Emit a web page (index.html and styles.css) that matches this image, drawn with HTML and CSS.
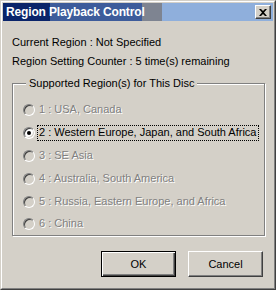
FILE: index.html
```html
<!DOCTYPE html>
<html lang="en">
<head>
    <meta charset="UTF-8">
    <title>Region Playback Control</title>
    <link rel="stylesheet" href="styles.css">
</head>
<body>
    <div class="window">
        <div class="window-inner">
            <div class="title-bar">
                <span class="title">Region Playback Control</span>
                <button class="close-btn" type="button">
                    <svg width="8" height="7" viewBox="0 0 8 7">
                        <path d="M0 0h2l2 2 2-2h2L5 3.5 8 7H6L4 5 2 7H0l3-3.5z" fill="#000"/>
                    </svg>
                </button>
            </div>

            <div class="content">
                <p class="info">Current Region : Not Specified</p>
                <p class="info">Region Setting Counter : 5 time(s) remaining</p>

                <div class="group">
                    <span class="group-label">Supported Region(s) for This Disc</span>
                    <ul class="regions">
                        <li class="region disabled"><span class="radio"></span><span class="region-text">1 : USA, Canada</span></li>
                        <li class="region"><span class="radio checked"></span><span class="region-text focused">2 : Western Europe, Japan, and South Africa</span></li>
                        <li class="region disabled"><span class="radio"></span><span class="region-text">3 : SE Asia</span></li>
                        <li class="region disabled"><span class="radio"></span><span class="region-text">4 : Australia, South America</span></li>
                        <li class="region disabled"><span class="radio"></span><span class="region-text">5 : Russia, Eastern Europe, and Africa</span></li>
                        <li class="region disabled"><span class="radio"></span><span class="region-text">6 : China</span></li>
                    </ul>
                </div>

                <div class="buttons">
                    <button class="btn default" type="button"><span>OK</span></button>
                    <button class="btn" type="button"><span>Cancel</span></button>
                </div>
            </div>
        </div>
    </div>
</body>
</html>
```

FILE: styles.css
```css
/* Hộp thoại kiểu Windows cổ điển */
* {
   box-sizing: border-box;
   font-family: 'Liberation Sans', Arial, sans-serif;
}

body {
   margin: 0;
   background: #d4d0c8;
}

.window {
   width: 276px;
   height: 290px;
   border: 1px solid;
   border-color: #d4d0c8 #404040 #404040 #d4d0c8;
   background: #d4d0c8;
}

.window-inner {
   height: 100%;
   border: 1px solid;
   border-color: #fff #808080 #808080 #fff;
   padding: 1px;
   display: flex;
   flex-direction: column;
}

.title-bar {
   height: 18px;
   display: flex;
   align-items: center;
   justify-content: space-between;
   padding: 0 2px 0 3px;
   background: linear-gradient(to right,
      #0a246a 0, #0a246a 47px,
      #3d5c9b 47px, #3d5c9b 139px,
      #7e8491 139px, #7e8491 159px,
      #8fafdc 159px);
}

.title {
   color: #fff;
   font-weight: bold;
   font-size: 12px;
   letter-spacing: -0.15px;
}

.close-btn {
   width: 16px;
   height: 14px;
   padding: 0;
   display: flex;
   align-items: center;
   justify-content: center;
   background: #d4d0c8;
   border: 1px solid;
   border-color: #fff #404040 #404040 #fff;
   box-shadow: inset -1px -1px #808080;
}

.content {
   padding: 0 9px;
   font-size: 11px;
   color: #000;
}

.info {
   margin: 0;
   line-height: 13px;
}

.info:first-child {
   margin-top: 15px;
}

.info + .info {
   margin-top: 6px;
}

.group {
   position: relative;
   margin-top: 15px;
   width: 253px;
   height: 153px;
   border: 1px solid #808080;
   box-shadow: inset 1px 1px #fff, 1px 1px #fff;
}

.group-label {
   position: absolute;
   left: 13px;
   top: -7px;
   padding: 0 3px;
   line-height: 13px;
   background: #d4d0c8;
}

.regions {
   list-style: none;
   margin: 0;
   padding: 15px 0 0 10px;
}

.region {
   height: 22.8px;
   display: flex;
   align-items: center;
}

.radio {
   width: 12px;
   height: 12px;
   flex: none;
   border-radius: 50%;
   border: 1px solid;
   border-color: #808080 #fff #fff #808080;
   box-shadow: inset 1px 1px #404040, inset -1px -1px #d4d0c8;
   background: #d4d0c8;
   display: flex;
   align-items: center;
   justify-content: center;
}

.radio.checked {
   background: #fff;
}

.radio.checked::after {
   content: "";
   width: 4px;
   height: 4px;
   border-radius: 50%;
   background: #000;
}

.region-text {
   margin-left: 2px;
   padding: 1px 2px 2px 2px;
   line-height: 13px;
   white-space: nowrap;
}

.region-text.focused {
   outline: 1px dotted #000;
   outline-offset: -1px;
}

.disabled .region-text {
   color: #808080;
   text-shadow: 1px 1px #fff;
}

.buttons {
   display: flex;
   justify-content: flex-end;
   gap: 12px;
   margin-top: 15px;
   padding-right: 1px;
}

.btn {
   width: 75px;
   height: 26px;
   padding: 0;
   font-size: 11px;
   color: #000;
   background: #d4d0c8;
   border: 1px solid;
   border-color: #fff #404040 #404040 #fff;
   box-shadow: inset -1px -1px #808080;
}

.btn.default {
   border: 1px solid #000;
   box-shadow: inset 1px 1px #fff, inset -1px -1px #404040, inset -2px -2px #808080;
}
```
